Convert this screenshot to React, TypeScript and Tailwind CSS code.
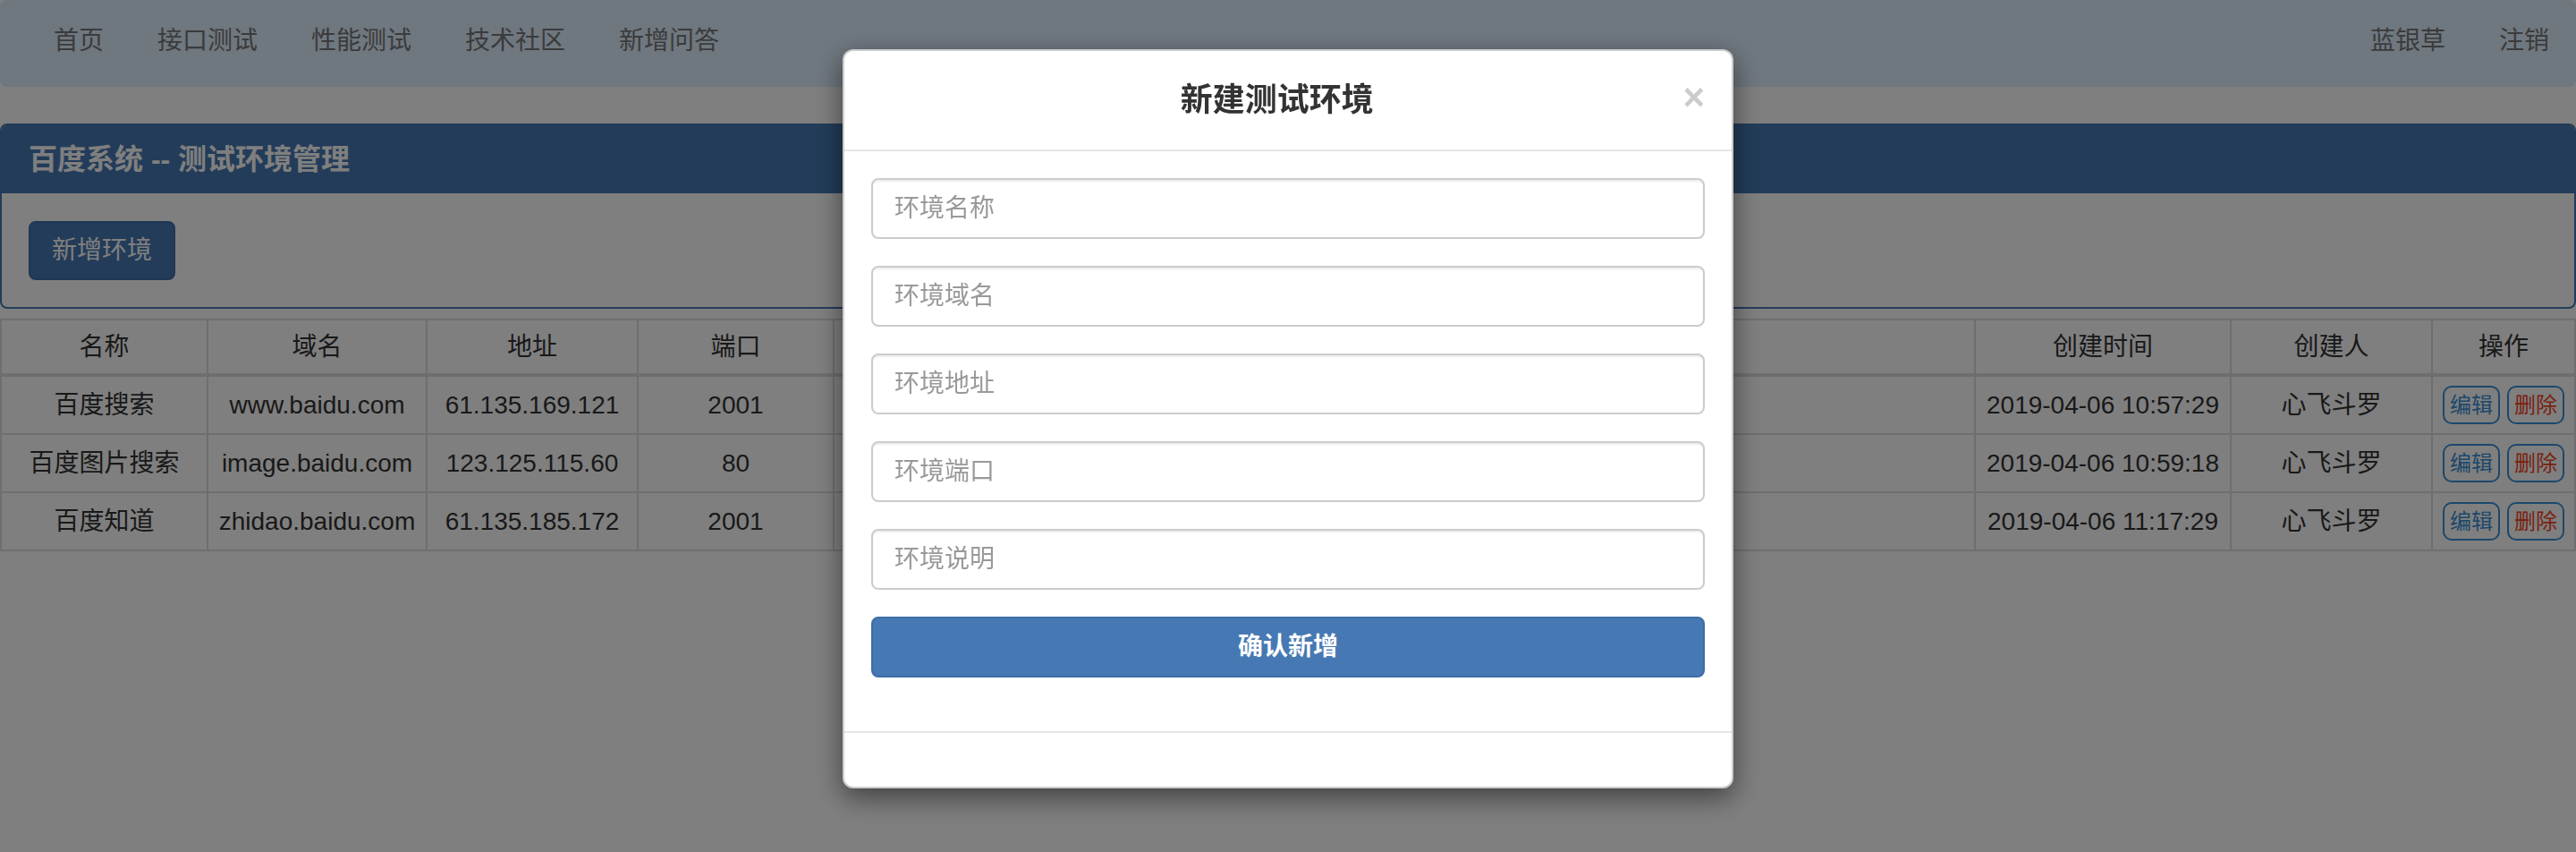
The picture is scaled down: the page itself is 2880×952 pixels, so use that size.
import React from "react";

const navLinks = ["首页", "接口测试", "性能测试", "技术社区", "新增问答"];

const envs = [
  {
    name: "百度搜索",
    domain: "www.baidu.com",
    ip: "61.135.169.121",
    port: "2001",
    desc: "百度搜索测试环境",
    created: "2019-04-06 10:57:29",
    owner: "心飞斗罗",
  },
  {
    name: "百度图片搜索",
    domain: "image.baidu.com",
    ip: "123.125.115.60",
    port: "80",
    desc: "百度图片搜索测试环境",
    created: "2019-04-06 10:59:18",
    owner: "心飞斗罗",
  },
  {
    name: "百度知道",
    domain: "zhidao.baidu.com",
    ip: "61.135.185.172",
    port: "2001",
    desc: "百度知道测试环境",
    created: "2019-04-06 11:17:29",
    owner: "心飞斗罗",
  },
];

const placeholders = ["环境名称", "环境域名", "环境地址", "环境端口", "环境说明"];

function Navbar() {
  return (
    <nav className="flex h-[97px] items-start justify-between rounded-[8px] bg-[#deeeff] px-[30px]">
      <ul className="flex">
        {navLinks.map((l) => (
          <li key={l}>
            <a className="block px-[30px] pt-[26px] text-[28px] leading-[40px] text-[#777]">{l}</a>
          </li>
        ))}
      </ul>
      <ul className="-mr-[30px] flex">
        <li>
          <a className="block px-[30px] pt-[26px] text-[28px] leading-[40px] text-[#777]">蓝银草</a>
        </li>
        <li>
          <a className="block px-[30px] pt-[26px] text-[28px] leading-[40px] text-[#777]">注销</a>
        </li>
      </ul>
    </nav>
  );
}

function EnvTable() {
  const th = "border-2 border-[#ddd] py-[10px] text-center font-normal leading-[39px]";
  const td = "border-2 border-[#ddd] py-[10px] text-center leading-[40px]";
  return (
    <table className="mt-[11px] w-full table-fixed text-[28px] text-[#333]">
      <colgroup>
        <col className="w-[231px]" />
        <col className="w-[245px]" />
        <col className="w-[236px]" />
        <col className="w-[219px]" />
        <col />
        <col className="w-[286px]" />
        <col className="w-[225px]" />
        <col className="w-[160px]" />
      </colgroup>
      <thead>
        <tr className="border-b-4 border-[#ddd]">
          <th className={th}>名称</th>
          <th className={th}>域名</th>
          <th className={th}>地址</th>
          <th className={th}>端口</th>
          <th className={th}>说明</th>
          <th className={th}>创建时间</th>
          <th className={th}>创建人</th>
          <th className={th}>操作</th>
        </tr>
      </thead>
      <tbody>
        {envs.map((e) => (
          <tr key={e.name}>
            <td className={td}>{e.name}</td>
            <td className={td}>{e.domain}</td>
            <td className={td}>{e.ip}</td>
            <td className={td}>{e.port}</td>
            <td className={td}>{e.desc}</td>
            <td className={td}>{e.created}</td>
            <td className={td}>{e.owner}</td>
            <td className="border-2 border-[#ddd] py-[10px] text-center">
              <div className="flex justify-center gap-[8px]">
                <button className="h-[43px] rounded-[10px] border-2 border-[#3a8fd6] bg-white px-[6px] text-[24px] leading-[35px] text-[#3a8fd6]">
                  编辑
                </button>
                <button className="h-[43px] rounded-[10px] border-2 border-[#3a8fd6] bg-white px-[6px] text-[24px] leading-[35px] text-[#f0441e]">
                  删除
                </button>
              </div>
            </td>
          </tr>
        ))}
      </tbody>
    </table>
  );
}

function AddEnvModal() {
  return (
    <div className="fixed inset-0 z-20 flex justify-center">
      <div className="mt-[55px] h-fit w-[996px] rounded-[12px] border-2 border-black/20 bg-white shadow-[0_10px_30px_rgba(0,0,0,0.5)]">
        {/* header */}
        <div className="flex items-start border-b-2 border-[#e5e5e5] p-[30px]">
          <h4 className="flex-1 text-center text-[36px] font-bold leading-[50px] text-[#333]">新建测试环境</h4>
          <button className="mt-[2px] text-[42px] font-bold leading-[40px] text-[#ccc]">×</button>
        </div>
        {/* body */}
        <div className="p-[30px]">
          {placeholders.map((p) => (
            <div key={p} className="mb-[30px]">
              <input
                placeholder={p}
                className="h-[68px] w-full rounded-[8px] border-2 border-[#ccc] px-[24px] text-[28px] text-[#555] shadow-[inset_0_2px_2px_rgba(0,0,0,0.075)] outline-none placeholder:text-[#999]"
              />
            </div>
          ))}
          <div className="mb-[30px]">
            <button className="h-[68px] w-full rounded-[8px] border-2 border-[#3d6ea6] bg-[#4679b3] text-[28px] font-bold text-white">
              确认新增
            </button>
          </div>
        </div>
        {/* footer */}
        <div className="h-[62px] border-t-2 border-[#e5e5e5]" />
      </div>
    </div>
  );
}

export default function App() {
  return (
    <div className="relative min-h-[952px] bg-white font-['Liberation_Sans','Noto_Sans_CJK_SC',sans-serif]">
      <Navbar />

      <div className="mt-[41px] rounded-[8px] border-2 border-[#4679b3]">
        <div className="rounded-t-[6px] bg-[#4679b3] px-[30px] py-[20px]">
          <h3 className="text-[32px] font-bold leading-[36px] text-white">百度系统 -- 测试环境管理</h3>
        </div>
        <div className="px-[30px] pb-[30px] pt-[31px]">
          <button className="h-[66px] rounded-[8px] border-2 border-[#3d6ea6] bg-[#4679b3] px-[24px] text-[28px] leading-[40px] text-white">
            新增环境
          </button>
        </div>
      </div>

      <EnvTable />

      {/* modal backdrop */}
      <div className="fixed inset-0 z-10 bg-black/50" />
      <AddEnvModal />
    </div>
  );
}
